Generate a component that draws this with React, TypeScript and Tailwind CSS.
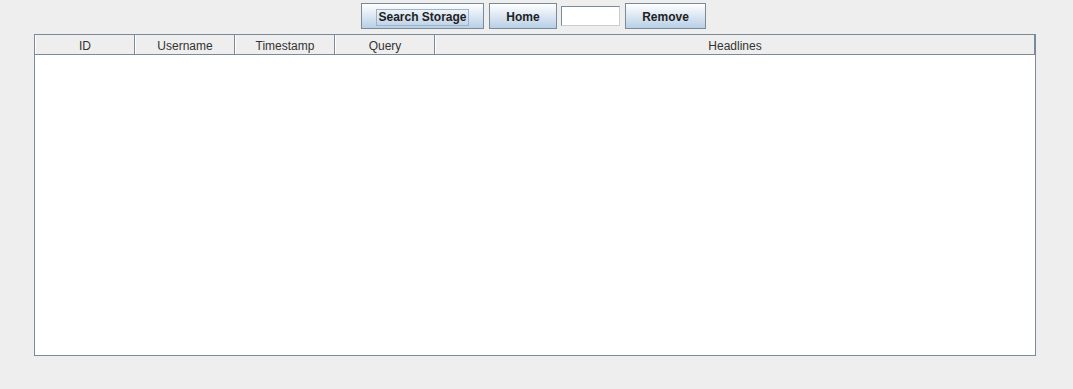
import React from 'react';

const columns = [
    { name: 'ID', width: 'w-[100px]' },
    { name: 'Username', width: 'w-[100px]' },
    { name: 'Timestamp', width: 'w-[100px]' },
    { name: 'Query', width: 'w-[100px]' },
    { name: 'Headlines', width: 'flex-1' },
];

const btn = "h-[26px] pt-[2px] border border-[#7a8a99] bg-gradient-to-b from-[#ffffff] to-[#b8cfe5] text-[12px] font-bold text-[#222222] flex items-center justify-center";

const App = () => {
    return (
        <div className="w-[1073px] h-[389px] bg-[#eeeeee] font-['Liberation_Sans',Arial,sans-serif] overflow-hidden">
            <div className="flex items-start pt-[3px] pl-[361px]">
                <button className={`${btn} w-[123px]`}>
                    <span className="border border-[#9fb3c8] px-[1px] leading-[15px]">Search Storage</span>
                </button>
                <button className={`${btn} w-[68px] ml-[5px]`}>Home</button>
                <input
                    type="text"
                    className="w-[59px] h-[20px] mt-[3px] bg-white border border-[#7a8a99] border-r-[#cccccc] border-b-[#cccccc] outline-none ml-[4px]"
                />
                <button className={`${btn} w-[81px] ml-[5px]`}>Remove</button>
            </div>
            <div className="ml-[34px] mt-[5px] w-[1002px] h-[322px] border border-[#7a8a99] bg-white flex flex-col">
                <div className="flex h-[20px] bg-[#eeeeee] border-b border-[#7a8a99]">
                    {columns.map((col) => (
                        <div
                            key={col.name}
                            className={`${col.width} pt-[2px] border-l border-l-white border-r border-r-[#7a8a99] flex items-center justify-center text-[12px] text-[#333333]`}
                        >
                            {col.name}
                        </div>
                    ))}
                </div>
                <div className="flex-1 bg-white"></div>
            </div>
        </div>
    );
};

export default App;
